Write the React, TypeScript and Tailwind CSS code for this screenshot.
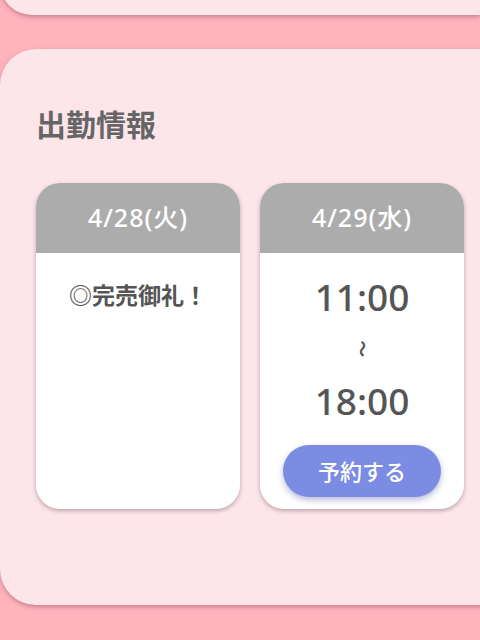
import React from 'react';

const font = { fontFamily: '"Noto Sans", "Noto Sans CJK JP", sans-serif' };

type Shift = {
  date: string;
  soldOut?: boolean;
  start?: string;
  end?: string;
};

const shifts: Shift[] = [
  { date: '4/28(火)', soldOut: true },
  { date: '4/29(水)', start: '11:00', end: '18:00' },
];

function ShiftCard({ shift }: { shift: Shift }) {
  return (
    <div className="w-[204px] h-[326px] shrink-0 rounded-[24px] bg-white overflow-hidden flex flex-col shadow-[0_2px_4px_rgba(120,80,90,0.45)]">
      <div className="h-[70px] bg-[#acacac] flex items-center justify-center text-white text-[25px] tracking-[0.04em] font-medium">
        {shift.date}
      </div>
      {shift.soldOut ? (
        <div className="pt-[25px] text-center text-[23px] font-bold text-[#555]">◎完売御礼！</div>
      ) : (
        <div className="flex flex-col items-center text-[#555]">
          <div className="mt-[21px] text-[37px] leading-[46px] font-medium">{shift.start}</div>
          <div className="h-[58px] flex items-center justify-center">
            <span className="inline-block rotate-90 text-[17px] font-bold">〜</span>
          </div>
          <div className="text-[37px] leading-[46px] font-medium">{shift.end}</div>
          <button className="mt-[21px] w-[158px] h-[52px] rounded-full bg-[#7b8ce2] text-white text-[22px] font-medium shadow-[0_3px_6px_rgba(80,90,160,0.4)]">
            予約する
          </button>
        </div>
      )}
    </div>
  );
}

export default function App() {
  return (
    <div style={font} className="w-[480px] h-[640px] overflow-hidden bg-[#ffb3bd] flex flex-col">
      <div className="-mt-[45px] h-[60px] shrink-0 bg-[#fde6ea] rounded-bl-[32px] shadow-[0_2px_4px_rgba(150,80,95,0.5)]" />
      <div className="mt-[34px] h-[556px] shrink-0 -mr-[40px] bg-[#fde6ea] rounded-l-[36px] shadow-[0_2px_4px_rgba(150,80,95,0.5)] pl-[36px] pt-[56px]">
        <h2 className="text-[30px] leading-[40px] font-bold text-[#666]">出勤情報</h2>
        <div className="mt-[38px] flex gap-[20px]">
          {shifts.map((s) => (
            <ShiftCard key={s.date} shift={s} />
          ))}
          <div className="w-[204px] h-[326px] shrink-0 rounded-[24px] bg-white shadow-[0_2px_4px_rgba(120,80,90,0.45)]" />
        </div>
      </div>
    </div>
  );
}
